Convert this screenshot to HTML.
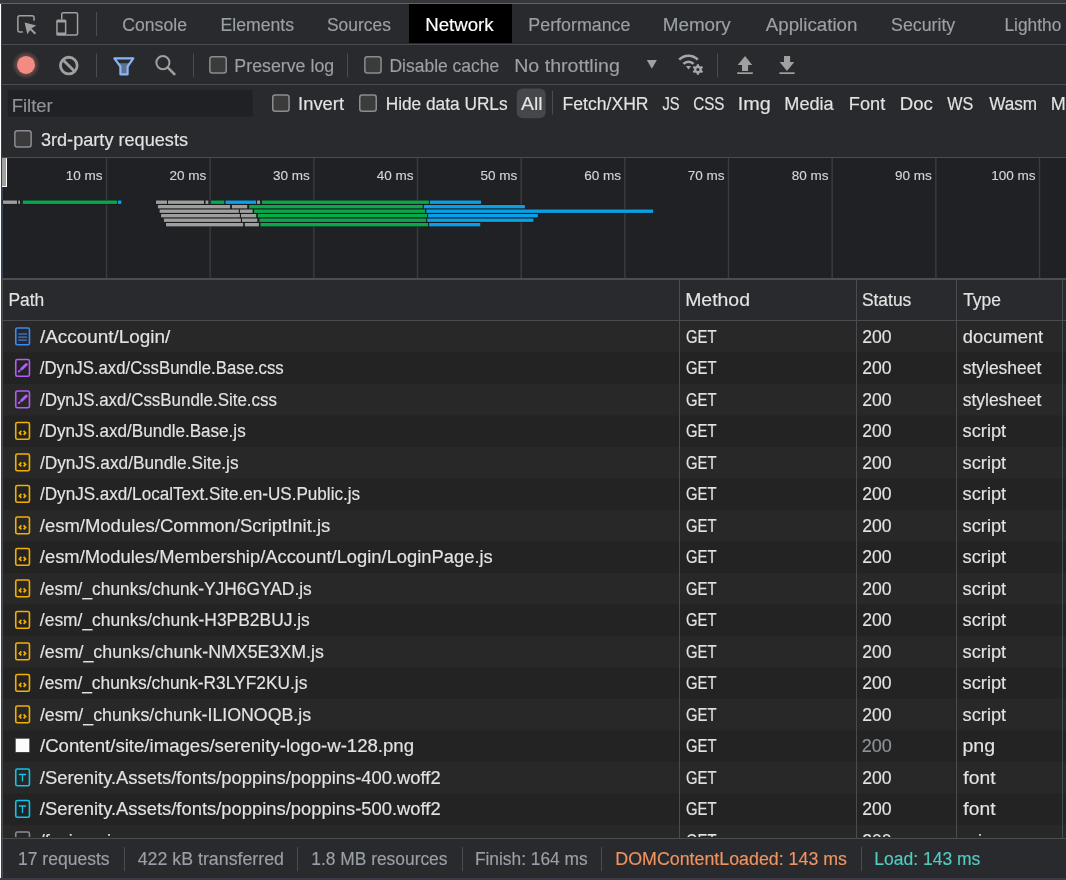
<!DOCTYPE html>
<html><head><meta charset="utf-8"><style>
html,body{margin:0;padding:0;width:1066px;height:880px;overflow:hidden;background:#292a2d}
svg{display:block;font-family:"Liberation Sans",sans-serif;will-change:transform}
</style></head><body>
<svg width="1066" height="880" viewBox="0 0 1066 880">
<defs><clipPath id="tclip"><rect x="0" y="321" width="1066" height="515.9"/></clipPath></defs>
<rect x="0" y="0" width="1066" height="3" fill="#36373b"/>
<rect x="0" y="3" width="1066" height="1" fill="#5f6166"/>
<rect x="0" y="4" width="1066" height="154" fill="#292a2d"/>
<rect x="0" y="44" width="1066" height="1" fill="#494c50"/>
<rect x="0" y="84" width="1066" height="1" fill="#494c50"/>
<rect x="0" y="157" width="1066" height="1" fill="#494c50"/>
<rect x="0" y="158" width="1066" height="120" fill="#202124"/>
<rect x="0" y="278" width="1066" height="2" fill="#4b4d51"/>
<rect x="0" y="280" width="1066" height="40" fill="#292a2d"/>
<rect x="0" y="320" width="1066" height="1" fill="#494c50"/>
<rect x="0" y="321.0" width="1066" height="31.5" fill="#282828"/>
<rect x="0" y="352.5" width="1066" height="31.5" fill="#232323"/>
<rect x="0" y="384.0" width="1066" height="31.5" fill="#282828"/>
<rect x="0" y="415.5" width="1066" height="31.5" fill="#232323"/>
<rect x="0" y="447.0" width="1066" height="31.5" fill="#282828"/>
<rect x="0" y="478.5" width="1066" height="31.5" fill="#232323"/>
<rect x="0" y="510.0" width="1066" height="31.5" fill="#282828"/>
<rect x="0" y="541.5" width="1066" height="31.5" fill="#232323"/>
<rect x="0" y="573.0" width="1066" height="31.5" fill="#282828"/>
<rect x="0" y="604.5" width="1066" height="31.5" fill="#232323"/>
<rect x="0" y="636.0" width="1066" height="31.5" fill="#282828"/>
<rect x="0" y="667.5" width="1066" height="31.5" fill="#232323"/>
<rect x="0" y="699.0" width="1066" height="31.5" fill="#282828"/>
<rect x="0" y="730.5" width="1066" height="31.5" fill="#232323"/>
<rect x="0" y="762.0" width="1066" height="31.5" fill="#282828"/>
<rect x="0" y="793.5" width="1066" height="31.5" fill="#232323"/>
<rect x="0" y="825.0" width="1066" height="13.0" fill="#282828"/>
<rect x="0" y="838" width="1066" height="1" fill="#494c50"/>
<rect x="0" y="839" width="1066" height="39" fill="#292a2d"/>
<rect x="0" y="878" width="1066" height="2" fill="#3a3b47"/>
<rect x="679" y="280" width="1" height="558" fill="#494c50"/>
<rect x="856" y="280" width="1" height="558" fill="#494c50"/>
<rect x="956" y="280" width="1" height="558" fill="#494c50"/>
<rect x="1062" y="280" width="1" height="558" fill="#494c50"/>
<rect x="0" y="4" width="1" height="874" fill="#ffffff"/>
<rect x="1" y="4" width="1" height="874" fill="#3c3e42"/>
<rect x="2" y="279" width="1" height="599" fill="#494c50"/>
<rect x="409" y="4" width="103" height="39" fill="#000000"/>
<rect x="96" y="12" width="1" height="24" fill="#494c50"/>
<rect x="96" y="53.5" width="1" height="23.5" fill="#494c50"/>
<rect x="193" y="53.5" width="1" height="23.5" fill="#494c50"/>
<rect x="347" y="53.5" width="1" height="23.5" fill="#494c50"/>
<rect x="717" y="53.5" width="1" height="23.5" fill="#494c50"/>
<rect x="552" y="91" width="1" height="23.5" fill="#494c50"/>
<rect x="124" y="847" width="1" height="24" fill="#494c50"/>
<rect x="297" y="847" width="1" height="24" fill="#494c50"/>
<rect x="462" y="847" width="1" height="24" fill="#494c50"/>
<rect x="601" y="847" width="1" height="24" fill="#494c50"/>
<rect x="861" y="847" width="1" height="24" fill="#494c50"/>
<rect x="105.75" y="158" width="1.5" height="120" fill="#3b3b3e"/>
<rect x="209.42" y="158" width="1.5" height="120" fill="#3b3b3e"/>
<rect x="313.08" y="158" width="1.5" height="120" fill="#3b3b3e"/>
<rect x="416.75" y="158" width="1.5" height="120" fill="#3b3b3e"/>
<rect x="520.42" y="158" width="1.5" height="120" fill="#3b3b3e"/>
<rect x="624.09" y="158" width="1.5" height="120" fill="#3b3b3e"/>
<rect x="727.75" y="158" width="1.5" height="120" fill="#3b3b3e"/>
<rect x="831.42" y="158" width="1.5" height="120" fill="#3b3b3e"/>
<rect x="935.09" y="158" width="1.5" height="120" fill="#3b3b3e"/>
<rect x="1038.75" y="158" width="1.5" height="120" fill="#3b3b3e"/>
<rect x="2" y="158" width="4" height="28" fill="#a0a0a0"/>
<rect x="6" y="158" width="1" height="29" fill="#ffffff"/>
<rect x="2" y="186" width="5" height="1" fill="#ffffff"/>
<rect x="2" y="187" width="1" height="91" fill="#34425c"/>
<rect x="3.00" y="200.50" width="14.00" height="3.4" fill="#9e9e9e" stroke="#18191b" stroke-width="1.1" paint-order="stroke"/>
<rect x="18.30" y="200.50" width="1.70" height="3.4" fill="#9e9e9e" stroke="#18191b" stroke-width="1.1" paint-order="stroke"/>
<rect x="22.80" y="200.50" width="94.20" height="3.4" fill="#0aa84c" stroke="#18191b" stroke-width="1.1" paint-order="stroke"/>
<rect x="118.00" y="200.50" width="3.40" height="3.4" fill="#0ba0e6" stroke="#18191b" stroke-width="1.1" paint-order="stroke"/>
<rect x="156.00" y="200.50" width="11.10" height="3.4" fill="#9e9e9e" stroke="#18191b" stroke-width="1.1" paint-order="stroke"/>
<rect x="168.00" y="200.50" width="36.00" height="3.4" fill="#9e9e9e" stroke="#18191b" stroke-width="1.1" paint-order="stroke"/>
<rect x="205.50" y="200.50" width="2.90" height="3.4" fill="#9e9e9e" stroke="#18191b" stroke-width="1.1" paint-order="stroke"/>
<rect x="210.80" y="200.50" width="13.50" height="3.4" fill="#0aa84c" stroke="#18191b" stroke-width="1.1" paint-order="stroke"/>
<rect x="225.50" y="200.50" width="30.70" height="3.4" fill="#0ba0e6" stroke="#18191b" stroke-width="1.1" paint-order="stroke"/>
<rect x="257.10" y="200.50" width="3.00" height="3.4" fill="#9e9e9e" stroke="#18191b" stroke-width="1.1" paint-order="stroke"/>
<rect x="261.90" y="200.50" width="167.00" height="3.4" fill="#0aa84c" stroke="#18191b" stroke-width="1.1" paint-order="stroke"/>
<rect x="429.90" y="200.50" width="51.20" height="3.4" fill="#0ba0e6" stroke="#18191b" stroke-width="1.1" paint-order="stroke"/>
<rect x="157.90" y="205.00" width="72.20" height="3.4" fill="#9e9e9e" stroke="#18191b" stroke-width="1.1" paint-order="stroke"/>
<rect x="231.90" y="205.00" width="15.30" height="3.4" fill="#9e9e9e" stroke="#18191b" stroke-width="1.1" paint-order="stroke"/>
<rect x="249.10" y="205.00" width="173.60" height="3.4" fill="#0aa84c" stroke="#18191b" stroke-width="1.1" paint-order="stroke"/>
<rect x="423.90" y="205.00" width="101.00" height="3.4" fill="#0ba0e6" stroke="#18191b" stroke-width="1.1" paint-order="stroke"/>
<rect x="159.60" y="209.50" width="79.20" height="3.4" fill="#9e9e9e" stroke="#18191b" stroke-width="1.1" paint-order="stroke"/>
<rect x="239.90" y="209.50" width="12.70" height="3.4" fill="#9e9e9e" stroke="#18191b" stroke-width="1.1" paint-order="stroke"/>
<rect x="254.10" y="209.50" width="171.00" height="3.4" fill="#0aa84c" stroke="#18191b" stroke-width="1.1" paint-order="stroke"/>
<rect x="426.30" y="209.50" width="226.90" height="3.4" fill="#0ba0e6" stroke="#18191b" stroke-width="1.1" paint-order="stroke"/>
<rect x="161.10" y="214.00" width="78.80" height="3.4" fill="#9e9e9e" stroke="#18191b" stroke-width="1.1" paint-order="stroke"/>
<rect x="241.00" y="214.00" width="15.20" height="3.4" fill="#9e9e9e" stroke="#18191b" stroke-width="1.1" paint-order="stroke"/>
<rect x="257.90" y="214.00" width="169.30" height="3.4" fill="#0aa84c" stroke="#18191b" stroke-width="1.1" paint-order="stroke"/>
<rect x="428.10" y="214.00" width="109.80" height="3.4" fill="#0ba0e6" stroke="#18191b" stroke-width="1.1" paint-order="stroke"/>
<rect x="163.90" y="218.50" width="77.00" height="3.4" fill="#9e9e9e" stroke="#18191b" stroke-width="1.1" paint-order="stroke"/>
<rect x="242.00" y="218.50" width="15.30" height="3.4" fill="#9e9e9e" stroke="#18191b" stroke-width="1.1" paint-order="stroke"/>
<rect x="259.40" y="218.50" width="166.90" height="3.4" fill="#0aa84c" stroke="#18191b" stroke-width="1.1" paint-order="stroke"/>
<rect x="427.20" y="218.50" width="106.20" height="3.4" fill="#0ba0e6" stroke="#18191b" stroke-width="1.1" paint-order="stroke"/>
<rect x="166.00" y="223.00" width="77.10" height="3.4" fill="#9e9e9e" stroke="#18191b" stroke-width="1.1" paint-order="stroke"/>
<rect x="244.80" y="223.00" width="14.10" height="3.4" fill="#9e9e9e" stroke="#18191b" stroke-width="1.1" paint-order="stroke"/>
<rect x="260.50" y="223.00" width="167.60" height="3.4" fill="#0aa84c" stroke="#18191b" stroke-width="1.1" paint-order="stroke"/>
<rect x="429.10" y="223.00" width="51.20" height="3.4" fill="#0ba0e6" stroke="#18191b" stroke-width="1.1" paint-order="stroke"/>
<path d="M22.8 32.05H19.85a2 2 0 0 1-2-2V17.85a2 2 0 0 1 2-2H32.05a2 2 0 0 1 2 2V20.8" fill="none" stroke="#a0a0a0" stroke-width="1.5"/>
<path d="M24.6 22.6L36.3 25.6L31.2 28.6L27.3 34.3Z" fill="#a0a0a0"/>
<path d="M30 28.5L35.4 33.7" stroke="#a0a0a0" stroke-width="2"/>
<rect x="61.75" y="12.85" width="15.8" height="22.2" rx="1.5" fill="none" stroke="#a0a0a0" stroke-width="1.5"/>
<rect x="56.2" y="19.6" width="10.2" height="16.2" rx="1.5" fill="#292a2d"/>
<path fill-rule="evenodd" d="M57.7 19.6H64.9A1.5 1.5 0 0 1 66.4 21.1V34.3A1.5 1.5 0 0 1 64.9 35.8H57.7A1.5 1.5 0 0 1 56.2 34.3V21.1A1.5 1.5 0 0 1 57.7 19.6ZM57.7 22.6V32.6H64.9V22.6Z" fill="#a0a0a0"/>
<defs><radialGradient id="glow"><stop offset="0.6" stop-color="#f28b82" stop-opacity="0.35"/><stop offset="1" stop-color="#f28b82" stop-opacity="0"/></radialGradient></defs>
<circle cx="26" cy="64.9" r="14" fill="url(#glow)"/>
<circle cx="26" cy="64.9" r="9" fill="#f28b82"/>
<circle cx="68.8" cy="65.6" r="8.35" fill="none" stroke="#a0a0a0" stroke-width="2.8"/>
<path d="M63.1 59.9L74.5 71.3" stroke="#a0a0a0" stroke-width="2.8"/>
<path d="M118 63.2H129.9L127.6 66.5V74.3H120.4V66.5Z" fill="#5e7191"/>
<path d="M114.4 58.4H133.3L127.6 66.5V74.3H120.4V66.5Z" fill="none" stroke="#8ab4f8" stroke-width="2.2" stroke-linejoin="round"/>
<circle cx="162.9" cy="62.6" r="6.55" fill="none" stroke="#a0a0a0" stroke-width="2.0"/>
<path d="M167.6 67.3L175.1 74.8" stroke="#a0a0a0" stroke-width="2.5"/>
<rect x="209.85" y="56.75" width="16.40" height="16.30" rx="2.5" fill="#3b3b3b" stroke="#8a8d90" stroke-width="1.5"/>
<rect x="364.85" y="56.75" width="16.20" height="16.30" rx="2.5" fill="#3b3b3b" stroke="#8a8d90" stroke-width="1.5"/>
<rect x="272.75" y="94.95" width="16.30" height="16.30" rx="2.5" fill="#3b3b3b" stroke="#8a8d90" stroke-width="1.5"/>
<rect x="359.75" y="94.95" width="16.50" height="16.30" rx="2.5" fill="#3b3b3b" stroke="#8a8d90" stroke-width="1.5"/>
<rect x="14.85" y="130.75" width="16.30" height="16.20" rx="2.5" fill="#3b3b3b" stroke="#8a8d90" stroke-width="1.5"/>
<path d="M646.8 59.9H656.9L651.85 68.7Z" fill="#a0a0a0"/>
<path d="M679.2 59.7A13.0 13.0 0 0 1 697.8 59.7" fill="none" stroke="#a3a7ab" stroke-width="2.6"/>
<path d="M683.4 63.9A7.2 7.2 0 0 1 693.6 63.9" fill="none" stroke="#a3a7ab" stroke-width="2.6"/>
<path d="M685.9 66.1L691.1 66.1L688.5 69.5Z" fill="#a3a7ab"/>
<path d="M696.61 65.77L696.86 64.15L698.94 64.15L699.19 65.77L700.49 66.52L702.01 65.92L703.05 67.73L701.78 68.75L701.78 70.25L703.05 71.27L702.01 73.08L700.49 72.48L699.19 73.23L698.94 74.85L696.86 74.85L696.61 73.23L695.31 72.48L693.79 73.08L692.75 71.27L694.02 70.25L694.02 68.75L692.75 67.73L693.79 65.92L695.31 66.52ZM699.45 69.50A1.55 1.55 0 1 0 696.35 69.50A1.55 1.55 0 1 0 699.45 69.50Z" fill="#a3a7ab" fill-rule="evenodd"/>
<path d="M745.1 55.9L752.2 65H748.1V71H742V65H737.7Z" fill="#a0a0a0"/>
<rect x="737.2" y="72.3" width="15.6" height="1.7" fill="#a0a0a0"/>
<path d="M784 55.9H790.1V62.1H794.3L787 71L779.6 62.1H784Z" fill="#a0a0a0"/>
<rect x="779.4" y="72.3" width="15.2" height="1.7" fill="#a0a0a0"/>
<rect x="516.7" y="88.4" width="29" height="29.8" rx="6" fill="#45474b"/>
<rect x="7.9" y="90.1" width="244.8" height="26.4" fill="#202124"/>
<rect x="15.75" y="328.05" width="13.7" height="16.7" rx="1.6" fill="none" stroke="#3b8af8" stroke-width="1.6"/>
<rect x="18.2" y="333.45" width="8.8" height="1.1" fill="#3b8af8"/>
<rect x="18.2" y="336.55" width="8.8" height="1.1" fill="#3b8af8"/>
<rect x="18.2" y="339.55" width="8.8" height="1.1" fill="#3b8af8"/>
<rect x="15.75" y="359.55" width="13.7" height="16.7" rx="1.6" fill="none" stroke="#b35ef6" stroke-width="1.6"/>
<path d="M21.6 369.10L26.3 364.40" stroke="#b35ef6" stroke-width="2.8" stroke-linecap="round"/>
<path d="M18.9 371.50L19.6 370.80" stroke="#b35ef6" stroke-width="2.0" stroke-linecap="round"/>
<rect x="15.75" y="391.05" width="13.7" height="16.7" rx="1.6" fill="none" stroke="#b35ef6" stroke-width="1.6"/>
<path d="M21.6 400.60L26.3 395.90" stroke="#b35ef6" stroke-width="2.8" stroke-linecap="round"/>
<path d="M18.9 403.00L19.6 402.30" stroke="#b35ef6" stroke-width="2.0" stroke-linecap="round"/>
<rect x="15.75" y="422.55" width="13.7" height="16.7" rx="1.6" fill="none" stroke="#f2b000" stroke-width="1.6"/>
<path d="M21.4 430.90L19.4 432.90L21.4 434.90M23.6 430.90L25.6 432.90L23.6 434.90" fill="none" stroke="#f2b000" stroke-width="1.7"/>
<rect x="15.75" y="454.05" width="13.7" height="16.7" rx="1.6" fill="none" stroke="#f2b000" stroke-width="1.6"/>
<path d="M21.4 462.40L19.4 464.40L21.4 466.40M23.6 462.40L25.6 464.40L23.6 466.40" fill="none" stroke="#f2b000" stroke-width="1.7"/>
<rect x="15.75" y="485.55" width="13.7" height="16.7" rx="1.6" fill="none" stroke="#f2b000" stroke-width="1.6"/>
<path d="M21.4 493.90L19.4 495.90L21.4 497.90M23.6 493.90L25.6 495.90L23.6 497.90" fill="none" stroke="#f2b000" stroke-width="1.7"/>
<rect x="15.75" y="517.05" width="13.7" height="16.7" rx="1.6" fill="none" stroke="#f2b000" stroke-width="1.6"/>
<path d="M21.4 525.40L19.4 527.40L21.4 529.40M23.6 525.40L25.6 527.40L23.6 529.40" fill="none" stroke="#f2b000" stroke-width="1.7"/>
<rect x="15.75" y="548.55" width="13.7" height="16.7" rx="1.6" fill="none" stroke="#f2b000" stroke-width="1.6"/>
<path d="M21.4 556.90L19.4 558.90L21.4 560.90M23.6 556.90L25.6 558.90L23.6 560.90" fill="none" stroke="#f2b000" stroke-width="1.7"/>
<rect x="15.75" y="580.05" width="13.7" height="16.7" rx="1.6" fill="none" stroke="#f2b000" stroke-width="1.6"/>
<path d="M21.4 588.40L19.4 590.40L21.4 592.40M23.6 588.40L25.6 590.40L23.6 592.40" fill="none" stroke="#f2b000" stroke-width="1.7"/>
<rect x="15.75" y="611.55" width="13.7" height="16.7" rx="1.6" fill="none" stroke="#f2b000" stroke-width="1.6"/>
<path d="M21.4 619.90L19.4 621.90L21.4 623.90M23.6 619.90L25.6 621.90L23.6 623.90" fill="none" stroke="#f2b000" stroke-width="1.7"/>
<rect x="15.75" y="643.05" width="13.7" height="16.7" rx="1.6" fill="none" stroke="#f2b000" stroke-width="1.6"/>
<path d="M21.4 651.40L19.4 653.40L21.4 655.40M23.6 651.40L25.6 653.40L23.6 655.40" fill="none" stroke="#f2b000" stroke-width="1.7"/>
<rect x="15.75" y="674.55" width="13.7" height="16.7" rx="1.6" fill="none" stroke="#f2b000" stroke-width="1.6"/>
<path d="M21.4 682.90L19.4 684.90L21.4 686.90M23.6 682.90L25.6 684.90L23.6 686.90" fill="none" stroke="#f2b000" stroke-width="1.7"/>
<rect x="15.75" y="706.05" width="13.7" height="16.7" rx="1.6" fill="none" stroke="#f2b000" stroke-width="1.6"/>
<path d="M21.4 714.40L19.4 716.40L21.4 718.40M23.6 714.40L25.6 716.40L23.6 718.40" fill="none" stroke="#f2b000" stroke-width="1.7"/>
<rect x="15.35" y="738.35" width="14.3" height="14.05" fill="none" stroke="#45484d" stroke-width="0.8"/>
<rect x="15.75" y="738.75" width="13.5" height="13.25" fill="#fcfcfc"/>
<rect x="15.75" y="769.05" width="13.7" height="16.7" rx="1.6" fill="none" stroke="#12c4ea" stroke-width="1.6"/>
<path d="M19.3 774.50H25.6M22.45 774.50V780.90" fill="none" stroke="#12c4ea" stroke-width="1.3" stroke-linecap="round"/>
<rect x="15.75" y="800.55" width="13.7" height="16.7" rx="1.6" fill="none" stroke="#12c4ea" stroke-width="1.6"/>
<path d="M19.3 806.00H25.6M22.45 806.00V812.40" fill="none" stroke="#12c4ea" stroke-width="1.3" stroke-linecap="round"/>
<rect x="15.75" y="832.05" width="13.7" height="16.7" rx="1.6" fill="none" stroke="#8a8d90" stroke-width="1.6" clip-path="url(#tclip)"/>
<text id="tab_Console" x="122.30" y="31.00" font-size="18" fill="#9aa0a6" stroke="#9aa0a6" stroke-width="0.15" textLength="64.64" lengthAdjust="spacingAndGlyphs">Console</text>
<text id="tab_Elements" x="220.52" y="31.00" font-size="18" fill="#9aa0a6" stroke="#9aa0a6" stroke-width="0.15" textLength="73.50" lengthAdjust="spacingAndGlyphs">Elements</text>
<text id="tab_Sources" x="327.00" y="31.00" font-size="18" fill="#9aa0a6" stroke="#9aa0a6" stroke-width="0.15" textLength="63.91" lengthAdjust="spacingAndGlyphs">Sources</text>
<text id="tab_Network" x="425.23" y="31.00" font-size="18" fill="#ffffff" stroke="#ffffff" stroke-width="0.15" textLength="68.44" lengthAdjust="spacingAndGlyphs">Network</text>
<text id="tab_Performance" x="528.37" y="31.00" font-size="18" fill="#9aa0a6" stroke="#9aa0a6" stroke-width="0.15" textLength="102.03" lengthAdjust="spacingAndGlyphs">Performance</text>
<text id="tab_Memory" x="662.70" y="31.00" font-size="18" fill="#9aa0a6" stroke="#9aa0a6" stroke-width="0.15" textLength="68.12" lengthAdjust="spacingAndGlyphs">Memory</text>
<text id="tab_Application" x="765.78" y="31.00" font-size="18" fill="#9aa0a6" stroke="#9aa0a6" stroke-width="0.15" textLength="91.68" lengthAdjust="spacingAndGlyphs">Application</text>
<text id="tab_Security" x="891.07" y="31.00" font-size="18" fill="#9aa0a6" stroke="#9aa0a6" stroke-width="0.15" textLength="64.20" lengthAdjust="spacingAndGlyphs">Security</text>
<text id="tab_Lighthouse" x="1004.46" y="31.00" font-size="18" fill="#9aa0a6" stroke="#9aa0a6" stroke-width="0.15" textLength="56.81" lengthAdjust="spacingAndGlyphs">Lightho</text>
<text id="preserve" x="234.37" y="71.90" font-size="18" fill="#9aa0a6" stroke="#9aa0a6" stroke-width="0.15" textLength="99.82" lengthAdjust="spacingAndGlyphs">Preserve log</text>
<text id="disable" x="389.47" y="71.90" font-size="18" fill="#9aa0a6" stroke="#9aa0a6" stroke-width="0.15" textLength="109.77" lengthAdjust="spacingAndGlyphs">Disable cache</text>
<text id="throttle" x="514.22" y="71.90" font-size="18" fill="#9aa0a6" stroke="#9aa0a6" stroke-width="0.15" textLength="105.62" lengthAdjust="spacingAndGlyphs">No throttling</text>
<text id="filter" x="11.68" y="112.00" font-size="18" fill="#8f9499" stroke="#8f9499" stroke-width="0.15" textLength="41.02" lengthAdjust="spacingAndGlyphs">Filter</text>
<text id="invert" x="298.05" y="109.80" font-size="18" fill="#e3e3e3" stroke="#e3e3e3" stroke-width="0.15" textLength="46.00" lengthAdjust="spacingAndGlyphs">Invert</text>
<text id="hide" x="385.66" y="109.80" font-size="18" fill="#e3e3e3" stroke="#e3e3e3" stroke-width="0.15" textLength="121.96" lengthAdjust="spacingAndGlyphs">Hide data URLs</text>
<text id="all" x="520.93" y="109.80" font-size="18" fill="#e3e3e3" stroke="#e3e3e3" stroke-width="0.15" textLength="21.62" lengthAdjust="spacingAndGlyphs">All</text>
<text id="ft_Fetch/XHR" x="562.51" y="109.80" font-size="18" fill="#e3e3e3" stroke="#e3e3e3" stroke-width="0.15" textLength="86.09" lengthAdjust="spacingAndGlyphs">Fetch/XHR</text>
<text id="ft_JS" x="662.45" y="109.80" font-size="18" fill="#e3e3e3" stroke="#e3e3e3" stroke-width="0.15" textLength="17.15" lengthAdjust="spacingAndGlyphs">JS</text>
<text id="ft_CSS" x="693.26" y="109.80" font-size="18" fill="#e3e3e3" stroke="#e3e3e3" stroke-width="0.15" textLength="31.18" lengthAdjust="spacingAndGlyphs">CSS</text>
<text id="ft_Img" x="737.86" y="109.80" font-size="18" fill="#e3e3e3" stroke="#e3e3e3" stroke-width="0.15" textLength="32.95" lengthAdjust="spacingAndGlyphs">Img</text>
<text id="ft_Media" x="784.30" y="109.80" font-size="18" fill="#e3e3e3" stroke="#e3e3e3" stroke-width="0.15" textLength="49.42" lengthAdjust="spacingAndGlyphs">Media</text>
<text id="ft_Font" x="848.87" y="109.80" font-size="18" fill="#e3e3e3" stroke="#e3e3e3" stroke-width="0.15" textLength="36.36" lengthAdjust="spacingAndGlyphs">Font</text>
<text id="ft_Doc" x="899.81" y="109.80" font-size="18" fill="#e3e3e3" stroke="#e3e3e3" stroke-width="0.15" textLength="33.02" lengthAdjust="spacingAndGlyphs">Doc</text>
<text id="ft_WS" x="947.29" y="109.80" font-size="18" fill="#e3e3e3" stroke="#e3e3e3" stroke-width="0.15" textLength="26.02" lengthAdjust="spacingAndGlyphs">WS</text>
<text id="ft_Wasm" x="989.16" y="109.80" font-size="18" fill="#e3e3e3" stroke="#e3e3e3" stroke-width="0.15" textLength="47.92" lengthAdjust="spacingAndGlyphs">Wasm</text>
<text id="ft_Manifest" x="1050.84" y="109.80" font-size="18" fill="#e3e3e3" stroke="#e3e3e3" stroke-width="0.15">Manifest</text>
<text id="third" x="40.92" y="145.80" font-size="18" fill="#e3e3e3" stroke="#e3e3e3" stroke-width="0.15" textLength="147.12" lengthAdjust="spacingAndGlyphs">3rd-party requests</text>
<text id="ov_0" x="102.49" y="179.80" font-size="13.5" fill="#d4d4d4" stroke="#d4d4d4" stroke-width="0.15" text-anchor="end">10 ms</text>
<text id="ov_1" x="206.36" y="179.80" font-size="13.5" fill="#d4d4d4" stroke="#d4d4d4" stroke-width="0.15" text-anchor="end">20 ms</text>
<text id="ov_2" x="309.86" y="179.80" font-size="13.5" fill="#d4d4d4" stroke="#d4d4d4" stroke-width="0.15" text-anchor="end">30 ms</text>
<text id="ov_3" x="413.59" y="179.80" font-size="13.5" fill="#d4d4d4" stroke="#d4d4d4" stroke-width="0.15" text-anchor="end">40 ms</text>
<text id="ov_4" x="517.34" y="179.80" font-size="13.5" fill="#d4d4d4" stroke="#d4d4d4" stroke-width="0.15" text-anchor="end">50 ms</text>
<text id="ov_5" x="620.91" y="179.80" font-size="13.5" fill="#d4d4d4" stroke="#d4d4d4" stroke-width="0.15" text-anchor="end">60 ms</text>
<text id="ov_6" x="724.41" y="179.80" font-size="13.5" fill="#d4d4d4" stroke="#d4d4d4" stroke-width="0.15" text-anchor="end">70 ms</text>
<text id="ov_7" x="828.40" y="179.80" font-size="13.5" fill="#d4d4d4" stroke="#d4d4d4" stroke-width="0.15" text-anchor="end">80 ms</text>
<text id="ov_8" x="931.86" y="179.80" font-size="13.5" fill="#d4d4d4" stroke="#d4d4d4" stroke-width="0.15" text-anchor="end">90 ms</text>
<text id="ov_9" x="1035.50" y="179.80" font-size="13.5" fill="#d4d4d4" stroke="#d4d4d4" stroke-width="0.15" text-anchor="end">100 ms</text>
<text id="h_path" x="8.43" y="305.90" font-size="18" fill="#e3e3e3" stroke="#e3e3e3" stroke-width="0.15" textLength="35.80" lengthAdjust="spacingAndGlyphs">Path</text>
<text id="h_method" x="685.17" y="305.90" font-size="18" fill="#e3e3e3" stroke="#e3e3e3" stroke-width="0.15" textLength="64.83" lengthAdjust="spacingAndGlyphs">Method</text>
<text id="h_status" x="861.88" y="305.90" font-size="18" fill="#e3e3e3" stroke="#e3e3e3" stroke-width="0.15" textLength="49.42" lengthAdjust="spacingAndGlyphs">Status</text>
<text id="h_type" x="963.15" y="305.90" font-size="18" fill="#e3e3e3" stroke="#e3e3e3" stroke-width="0.15" textLength="37.86" lengthAdjust="spacingAndGlyphs">Type</text>
<text id="p0" x="39.90" y="342.90" font-size="18" fill="#e3e3e3" stroke="#e3e3e3" stroke-width="0.15" textLength="130.47" lengthAdjust="spacingAndGlyphs">/Account/Login/</text>
<text id="m0" x="686.01" y="342.90" font-size="18" fill="#e3e3e3" stroke="#e3e3e3" stroke-width="0.15" textLength="30.53" lengthAdjust="spacingAndGlyphs">GET</text>
<text id="s0" x="862.20" y="342.90" font-size="18" fill="#e3e3e3" stroke="#e3e3e3" stroke-width="0.15" textLength="29.30" lengthAdjust="spacingAndGlyphs">200</text>
<text id="y0" x="962.86" y="342.90" font-size="18" fill="#e3e3e3" stroke="#e3e3e3" stroke-width="0.15" textLength="80.28" lengthAdjust="spacingAndGlyphs">document</text>
<text id="p1" x="39.85" y="374.40" font-size="18" fill="#e3e3e3" stroke="#e3e3e3" stroke-width="0.15" textLength="243.88" lengthAdjust="spacingAndGlyphs">/DynJS.axd/CssBundle.Base.css</text>
<text id="m1" x="686.01" y="374.40" font-size="18" fill="#e3e3e3" stroke="#e3e3e3" stroke-width="0.15" textLength="30.53" lengthAdjust="spacingAndGlyphs">GET</text>
<text id="s1" x="862.20" y="374.40" font-size="18" fill="#e3e3e3" stroke="#e3e3e3" stroke-width="0.15" textLength="29.30" lengthAdjust="spacingAndGlyphs">200</text>
<text id="y1" x="962.71" y="374.40" font-size="18" fill="#e3e3e3" stroke="#e3e3e3" stroke-width="0.15" textLength="78.62" lengthAdjust="spacingAndGlyphs">stylesheet</text>
<text id="p2" x="39.99" y="405.90" font-size="18" fill="#e3e3e3" stroke="#e3e3e3" stroke-width="0.15" textLength="236.91" lengthAdjust="spacingAndGlyphs">/DynJS.axd/CssBundle.Site.css</text>
<text id="m2" x="686.01" y="405.90" font-size="18" fill="#e3e3e3" stroke="#e3e3e3" stroke-width="0.15" textLength="30.53" lengthAdjust="spacingAndGlyphs">GET</text>
<text id="s2" x="862.20" y="405.90" font-size="18" fill="#e3e3e3" stroke="#e3e3e3" stroke-width="0.15" textLength="29.30" lengthAdjust="spacingAndGlyphs">200</text>
<text id="y2" x="962.71" y="405.90" font-size="18" fill="#e3e3e3" stroke="#e3e3e3" stroke-width="0.15" textLength="78.62" lengthAdjust="spacingAndGlyphs">stylesheet</text>
<text id="p3" x="39.82" y="437.40" font-size="18" fill="#e3e3e3" stroke="#e3e3e3" stroke-width="0.15" textLength="205.87" lengthAdjust="spacingAndGlyphs">/DynJS.axd/Bundle.Base.js</text>
<text id="m3" x="686.01" y="437.40" font-size="18" fill="#e3e3e3" stroke="#e3e3e3" stroke-width="0.15" textLength="30.53" lengthAdjust="spacingAndGlyphs">GET</text>
<text id="s3" x="862.20" y="437.40" font-size="18" fill="#e3e3e3" stroke="#e3e3e3" stroke-width="0.15" textLength="29.30" lengthAdjust="spacingAndGlyphs">200</text>
<text id="y3" x="962.64" y="437.40" font-size="18" fill="#e3e3e3" stroke="#e3e3e3" stroke-width="0.15" textLength="43.54" lengthAdjust="spacingAndGlyphs">script</text>
<text id="p4" x="39.90" y="468.90" font-size="18" fill="#e3e3e3" stroke="#e3e3e3" stroke-width="0.15" textLength="198.64" lengthAdjust="spacingAndGlyphs">/DynJS.axd/Bundle.Site.js</text>
<text id="m4" x="686.01" y="468.90" font-size="18" fill="#e3e3e3" stroke="#e3e3e3" stroke-width="0.15" textLength="30.53" lengthAdjust="spacingAndGlyphs">GET</text>
<text id="s4" x="862.20" y="468.90" font-size="18" fill="#e3e3e3" stroke="#e3e3e3" stroke-width="0.15" textLength="29.30" lengthAdjust="spacingAndGlyphs">200</text>
<text id="y4" x="962.64" y="468.90" font-size="18" fill="#e3e3e3" stroke="#e3e3e3" stroke-width="0.15" textLength="43.54" lengthAdjust="spacingAndGlyphs">script</text>
<text id="p5" x="40.00" y="500.40" font-size="18" fill="#e3e3e3" stroke="#e3e3e3" stroke-width="0.15" textLength="320.07" lengthAdjust="spacingAndGlyphs">/DynJS.axd/LocalText.Site.en-US.Public.js</text>
<text id="m5" x="686.01" y="500.40" font-size="18" fill="#e3e3e3" stroke="#e3e3e3" stroke-width="0.15" textLength="30.53" lengthAdjust="spacingAndGlyphs">GET</text>
<text id="s5" x="862.20" y="500.40" font-size="18" fill="#e3e3e3" stroke="#e3e3e3" stroke-width="0.15" textLength="29.30" lengthAdjust="spacingAndGlyphs">200</text>
<text id="y5" x="962.64" y="500.40" font-size="18" fill="#e3e3e3" stroke="#e3e3e3" stroke-width="0.15" textLength="43.54" lengthAdjust="spacingAndGlyphs">script</text>
<text id="p6" x="39.81" y="531.90" font-size="18" fill="#e3e3e3" stroke="#e3e3e3" stroke-width="0.15" textLength="290.47" lengthAdjust="spacingAndGlyphs">/esm/Modules/Common/ScriptInit.js</text>
<text id="m6" x="686.01" y="531.90" font-size="18" fill="#e3e3e3" stroke="#e3e3e3" stroke-width="0.15" textLength="30.53" lengthAdjust="spacingAndGlyphs">GET</text>
<text id="s6" x="862.20" y="531.90" font-size="18" fill="#e3e3e3" stroke="#e3e3e3" stroke-width="0.15" textLength="29.30" lengthAdjust="spacingAndGlyphs">200</text>
<text id="y6" x="962.64" y="531.90" font-size="18" fill="#e3e3e3" stroke="#e3e3e3" stroke-width="0.15" textLength="43.54" lengthAdjust="spacingAndGlyphs">script</text>
<text id="p7" x="39.88" y="563.40" font-size="18" fill="#e3e3e3" stroke="#e3e3e3" stroke-width="0.15" textLength="452.87" lengthAdjust="spacingAndGlyphs">/esm/Modules/Membership/Account/Login/LoginPage.js</text>
<text id="m7" x="686.01" y="563.40" font-size="18" fill="#e3e3e3" stroke="#e3e3e3" stroke-width="0.15" textLength="30.53" lengthAdjust="spacingAndGlyphs">GET</text>
<text id="s7" x="862.20" y="563.40" font-size="18" fill="#e3e3e3" stroke="#e3e3e3" stroke-width="0.15" textLength="29.30" lengthAdjust="spacingAndGlyphs">200</text>
<text id="y7" x="962.64" y="563.40" font-size="18" fill="#e3e3e3" stroke="#e3e3e3" stroke-width="0.15" textLength="43.54" lengthAdjust="spacingAndGlyphs">script</text>
<text id="p8" x="39.98" y="594.90" font-size="18" fill="#e3e3e3" stroke="#e3e3e3" stroke-width="0.15" textLength="271.82" lengthAdjust="spacingAndGlyphs">/esm/_chunks/chunk-YJH6GYAD.js</text>
<text id="m8" x="686.01" y="594.90" font-size="18" fill="#e3e3e3" stroke="#e3e3e3" stroke-width="0.15" textLength="30.53" lengthAdjust="spacingAndGlyphs">GET</text>
<text id="s8" x="862.20" y="594.90" font-size="18" fill="#e3e3e3" stroke="#e3e3e3" stroke-width="0.15" textLength="29.30" lengthAdjust="spacingAndGlyphs">200</text>
<text id="y8" x="962.64" y="594.90" font-size="18" fill="#e3e3e3" stroke="#e3e3e3" stroke-width="0.15" textLength="43.54" lengthAdjust="spacingAndGlyphs">script</text>
<text id="p9" x="39.86" y="626.40" font-size="18" fill="#e3e3e3" stroke="#e3e3e3" stroke-width="0.15" textLength="269.98" lengthAdjust="spacingAndGlyphs">/esm/_chunks/chunk-H3PB2BUJ.js</text>
<text id="m9" x="686.01" y="626.40" font-size="18" fill="#e3e3e3" stroke="#e3e3e3" stroke-width="0.15" textLength="30.53" lengthAdjust="spacingAndGlyphs">GET</text>
<text id="s9" x="862.20" y="626.40" font-size="18" fill="#e3e3e3" stroke="#e3e3e3" stroke-width="0.15" textLength="29.30" lengthAdjust="spacingAndGlyphs">200</text>
<text id="y9" x="962.64" y="626.40" font-size="18" fill="#e3e3e3" stroke="#e3e3e3" stroke-width="0.15" textLength="43.54" lengthAdjust="spacingAndGlyphs">script</text>
<text id="p10" x="39.91" y="657.90" font-size="18" fill="#e3e3e3" stroke="#e3e3e3" stroke-width="0.15" textLength="284.00" lengthAdjust="spacingAndGlyphs">/esm/_chunks/chunk-NMX5E3XM.js</text>
<text id="m10" x="686.01" y="657.90" font-size="18" fill="#e3e3e3" stroke="#e3e3e3" stroke-width="0.15" textLength="30.53" lengthAdjust="spacingAndGlyphs">GET</text>
<text id="s10" x="862.20" y="657.90" font-size="18" fill="#e3e3e3" stroke="#e3e3e3" stroke-width="0.15" textLength="29.30" lengthAdjust="spacingAndGlyphs">200</text>
<text id="y10" x="962.64" y="657.90" font-size="18" fill="#e3e3e3" stroke="#e3e3e3" stroke-width="0.15" textLength="43.54" lengthAdjust="spacingAndGlyphs">script</text>
<text id="p11" x="39.83" y="689.40" font-size="18" fill="#e3e3e3" stroke="#e3e3e3" stroke-width="0.15" textLength="267.49" lengthAdjust="spacingAndGlyphs">/esm/_chunks/chunk-R3LYF2KU.js</text>
<text id="m11" x="686.01" y="689.40" font-size="18" fill="#e3e3e3" stroke="#e3e3e3" stroke-width="0.15" textLength="30.53" lengthAdjust="spacingAndGlyphs">GET</text>
<text id="s11" x="862.20" y="689.40" font-size="18" fill="#e3e3e3" stroke="#e3e3e3" stroke-width="0.15" textLength="29.30" lengthAdjust="spacingAndGlyphs">200</text>
<text id="y11" x="962.64" y="689.40" font-size="18" fill="#e3e3e3" stroke="#e3e3e3" stroke-width="0.15" textLength="43.54" lengthAdjust="spacingAndGlyphs">script</text>
<text id="p12" x="39.92" y="720.90" font-size="18" fill="#e3e3e3" stroke="#e3e3e3" stroke-width="0.15" textLength="271.12" lengthAdjust="spacingAndGlyphs">/esm/_chunks/chunk-ILIONOQB.js</text>
<text id="m12" x="686.01" y="720.90" font-size="18" fill="#e3e3e3" stroke="#e3e3e3" stroke-width="0.15" textLength="30.53" lengthAdjust="spacingAndGlyphs">GET</text>
<text id="s12" x="862.20" y="720.90" font-size="18" fill="#e3e3e3" stroke="#e3e3e3" stroke-width="0.15" textLength="29.30" lengthAdjust="spacingAndGlyphs">200</text>
<text id="y12" x="962.64" y="720.90" font-size="18" fill="#e3e3e3" stroke="#e3e3e3" stroke-width="0.15" textLength="43.54" lengthAdjust="spacingAndGlyphs">script</text>
<text id="p13" x="39.99" y="752.40" font-size="18" fill="#e3e3e3" stroke="#e3e3e3" stroke-width="0.15" textLength="374.07" lengthAdjust="spacingAndGlyphs">/Content/site/images/serenity-logo-w-128.png</text>
<text id="m13" x="686.01" y="752.40" font-size="18" fill="#e3e3e3" stroke="#e3e3e3" stroke-width="0.15" textLength="30.53" lengthAdjust="spacingAndGlyphs">GET</text>
<text id="s13" x="861.75" y="752.40" font-size="18" fill="#8f9499" stroke="#8f9499" stroke-width="0.15" textLength="30.10" lengthAdjust="spacingAndGlyphs">200</text>
<text id="y13" x="962.43" y="752.40" font-size="18" fill="#e3e3e3" stroke="#e3e3e3" stroke-width="0.15" textLength="32.69" lengthAdjust="spacingAndGlyphs">png</text>
<text id="p14" x="39.87" y="783.90" font-size="18" fill="#e3e3e3" stroke="#e3e3e3" stroke-width="0.15" textLength="400.75" lengthAdjust="spacingAndGlyphs">/Serenity.Assets/fonts/poppins/poppins-400.woff2</text>
<text id="m14" x="686.01" y="783.90" font-size="18" fill="#e3e3e3" stroke="#e3e3e3" stroke-width="0.15" textLength="30.53" lengthAdjust="spacingAndGlyphs">GET</text>
<text id="s14" x="862.20" y="783.90" font-size="18" fill="#e3e3e3" stroke="#e3e3e3" stroke-width="0.15" textLength="29.30" lengthAdjust="spacingAndGlyphs">200</text>
<text id="y14" x="963.37" y="783.90" font-size="18" fill="#e3e3e3" stroke="#e3e3e3" stroke-width="0.15" textLength="32.13" lengthAdjust="spacingAndGlyphs">font</text>
<text id="p15" x="39.87" y="815.40" font-size="18" fill="#e3e3e3" stroke="#e3e3e3" stroke-width="0.15" textLength="400.75" lengthAdjust="spacingAndGlyphs">/Serenity.Assets/fonts/poppins/poppins-500.woff2</text>
<text id="m15" x="686.01" y="815.40" font-size="18" fill="#e3e3e3" stroke="#e3e3e3" stroke-width="0.15" textLength="30.53" lengthAdjust="spacingAndGlyphs">GET</text>
<text id="s15" x="862.20" y="815.40" font-size="18" fill="#e3e3e3" stroke="#e3e3e3" stroke-width="0.15" textLength="29.30" lengthAdjust="spacingAndGlyphs">200</text>
<text id="y15" x="963.37" y="815.40" font-size="18" fill="#e3e3e3" stroke="#e3e3e3" stroke-width="0.15" textLength="32.13" lengthAdjust="spacingAndGlyphs">font</text>
<text id="p16" clip-path="url(#tclip)" x="39.86" y="846.90" font-size="18" fill="#e3e3e3" stroke="#e3e3e3" stroke-width="0.15">/favicon.ico</text>
<text id="m16" clip-path="url(#tclip)" x="686.01" y="846.90" font-size="18" fill="#e3e3e3" stroke="#e3e3e3" stroke-width="0.15" textLength="30.53" lengthAdjust="spacingAndGlyphs">GET</text>
<text id="s16" clip-path="url(#tclip)" x="862.20" y="846.90" font-size="18" fill="#e3e3e3" stroke="#e3e3e3" stroke-width="0.15" textLength="29.30" lengthAdjust="spacingAndGlyphs">200</text>
<text id="y16" clip-path="url(#tclip)" x="963.06" y="846.90" font-size="18" fill="#e3e3e3" stroke="#e3e3e3" stroke-width="0.15">x-icon</text>
<text id="st1" x="17.94" y="865.00" font-size="18" fill="#9aa0a6" stroke="#9aa0a6" stroke-width="0.15" textLength="91.61" lengthAdjust="spacingAndGlyphs">17 requests</text>
<text id="st2" x="137.67" y="865.00" font-size="18" fill="#9aa0a6" stroke="#9aa0a6" stroke-width="0.15" textLength="146.33" lengthAdjust="spacingAndGlyphs">422 kB transferred</text>
<text id="st3" x="311.32" y="865.00" font-size="18" fill="#9aa0a6" stroke="#9aa0a6" stroke-width="0.15" textLength="136.15" lengthAdjust="spacingAndGlyphs">1.8 MB resources</text>
<text id="st4" x="474.90" y="865.00" font-size="18" fill="#9aa0a6" stroke="#9aa0a6" stroke-width="0.15" textLength="112.77" lengthAdjust="spacingAndGlyphs">Finish: 164 ms</text>
<text id="st5" x="615.34" y="865.00" font-size="18" fill="#f0935f" stroke="#f0935f" stroke-width="0.15" textLength="231.69" lengthAdjust="spacingAndGlyphs">DOMContentLoaded: 143 ms</text>
<text id="st6" x="874.17" y="865.00" font-size="18" fill="#4fcdc3" stroke="#4fcdc3" stroke-width="0.15" textLength="106.22" lengthAdjust="spacingAndGlyphs">Load: 143 ms</text>
</svg>
</body></html>
